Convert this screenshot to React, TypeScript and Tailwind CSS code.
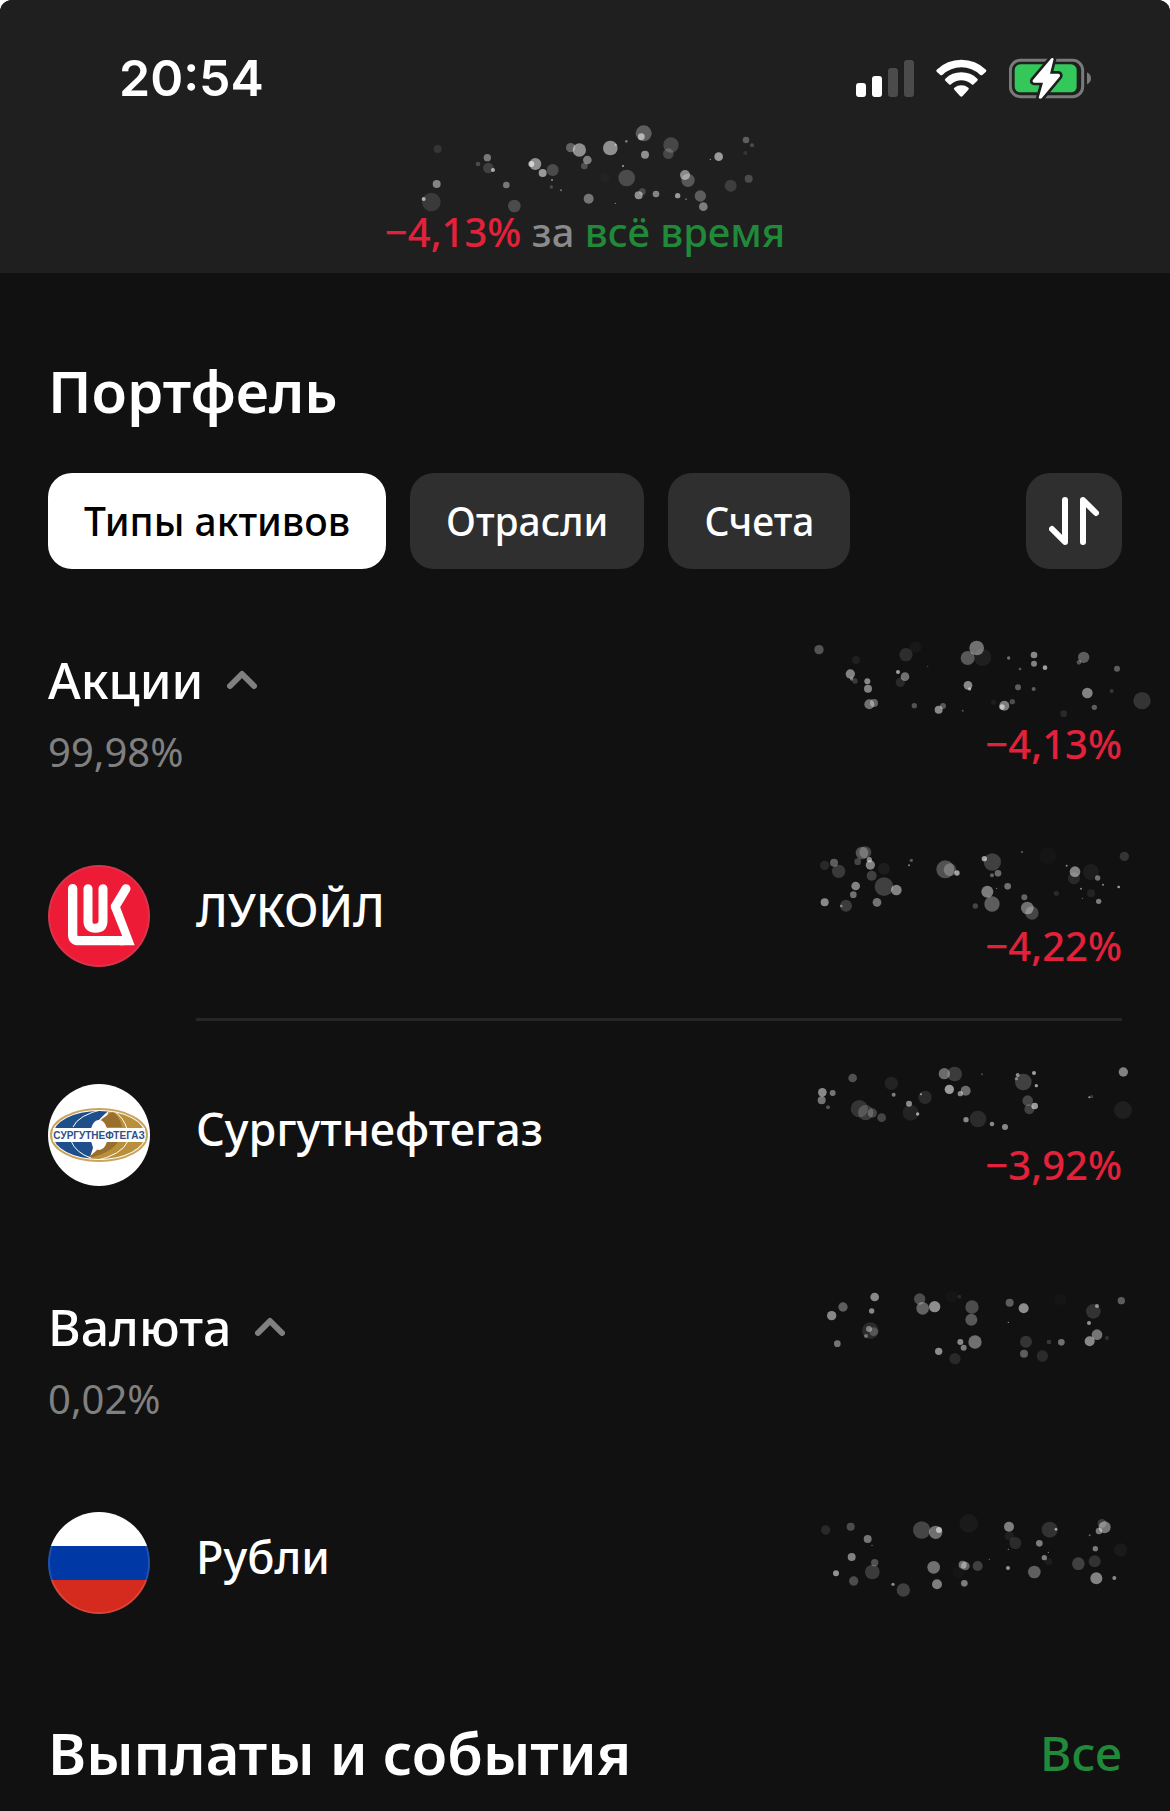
import { useState, type ReactNode } from 'react';

// [cx, cy, r, opacity]
type Dot = [number, number, number, number];

const totalDots: Dot[] = [
  [203, 117, 12, 0.1], [352, 143, 11, 0.4], [324, 162, 7, 0.2], [355, 174, 16, 0.15], [369, 180, 6, 0.6],
  [200, 222, 12, 0.45], [161, 267, 6, 0.6], [184, 276, 28, 0.12], [409, 225, 10, 0.4], [433, 288, 19, 0.2],
  [496, 162, 18, 0.5], [484, 162, 9, 0.6], [518, 189, 12, 0.55], [548, 180, 18, 0.2], [546, 210, 3, 0.5],
  [544, 231, 5, 0.2], [573, 241, 3, 0.4], [602, 113, 14, 0.3], [628, 120, 20, 0.5], [652, 150, 13, 0.42],
  [643, 168, 10, 0.22], [656, 266, 15, 0.38], [721, 114, 22, 0.5], [769, 94, 4, 0.4], [737, 105, 3, 0.5],
  [759, 168, 3, 0.6], [770, 204, 25, 0.2], [821, 70, 24, 0.28], [814, 80, 10, 0.55], [825, 134, 12, 0.5],
  [903, 105, 23, 0.18], [895, 131, 16, 0.18], [1046, 140, 13, 0.55], [1021, 148, 2, 0.6], [1128, 90, 10, 0.28],
  [1146, 106, 6, 0.2], [1126, 129, 6, 0.1], [1136, 206, 12, 0.2], [1082, 227, 18, 0.14], [945, 195, 15, 0.48],
  [954, 211, 20, 0.25], [923, 257, 8, 0.55], [991, 258, 17, 0.28], [1000, 290, 13, 0.42], [858, 252, 10, 0.45],
  [806, 256, 12, 0.5], [817, 245, 10, 0.2], [736, 280, 2, 0.5], [948, 268, 3, 0.3], [704, 203, 14, 0.02],
];

const stocksDots: Dot[] = [
  [117, 89, 14, 0.28], [228, 120, 12, 0.06], [211, 162, 14, 0.48], [215, 177, 5, 0.4], [225, 183, 8, 0.18],
  [262, 184, 9, 0.5], [264, 206, 12, 0.48], [268, 253, 15, 0.4], [282, 249, 12, 0.35], [378, 104, 20, 0.12],
  [406, 82, 18, 0.03], [354, 156, 6, 0.6], [375, 170, 13, 0.4], [361, 187, 14, 0.1], [443, 139, 2, 0.3],
  [403, 257, 8, 0.28], [476, 269, 12, 0.5], [489, 258, 9, 0.3], [548, 272, 3, 0.3], [590, 84, 22, 0.4],
  [563, 114, 21, 0.3], [608, 112, 26, 0.06], [564, 196, 13, 0.5], [569, 207, 5, 0.5], [686, 114, 5, 0.4],
  [720, 147, 4, 0.3], [762, 105, 10, 0.5], [762, 131, 9, 0.48], [795, 143, 7, 0.6], [714, 202, 9, 0.32],
  [761, 207, 6, 0.32], [673, 257, 15, 0.45], [666, 261, 8, 0.55], [697, 245, 8, 0.25], [641, 247, 8, 0.05],
  [911, 112, 17, 0.32], [897, 127, 7, 0.28], [1011, 146, 9, 0.32], [922, 219, 16, 0.48], [943, 262, 8, 0.32],
  [995, 213, 6, 0.16], [851, 281, 10, 0.1], [1086, 242, 26, 0.15],
];

const lukoilDots: Dot[] = [
  [134, 736, 14, 0.1], [162, 728, 12, 0.32], [176, 754, 20, 0.17], [246, 699, 19, 0.28], [256, 697, 18, 0.22],
  [233, 725, 10, 0.22], [268, 719, 8, 0.5], [271, 735, 14, 0.48], [312, 746, 18, 0.05], [275, 767, 15, 0.2],
  [227, 798, 13, 0.48], [220, 824, 10, 0.4], [312, 800, 28, 0.2], [349, 810, 16, 0.48], [134, 847, 12, 0.5],
  [198, 857, 18, 0.18], [184, 858, 4, 0.4], [291, 847, 13, 0.42], [394, 721, 5, 0.3], [387, 736, 3, 0.5],
  [496, 748, 27, 0.27], [510, 749, 19, 0.24], [531, 759, 8, 0.6], [637, 726, 26, 0.2], [613, 716, 8, 0.6],
  [654, 760, 10, 0.38], [636, 766, 6, 0.35], [726, 696, 3, 0.35], [650, 805, 2, 0.5], [683, 799, 10, 0.4],
  [622, 815, 18, 0.45], [636, 852, 23, 0.32], [586, 858, 8, 0.22], [733, 832, 9, 0.35], [742, 864, 19, 0.4],
  [756, 879, 20, 0.22], [803, 706, 26, 0.02], [885, 755, 16, 0.48], [882, 775, 18, 0.1], [933, 756, 24, 0.05],
  [953, 774, 8, 0.4], [860, 737, 3, 0.5], [969, 794, 3, 0.5], [903, 806, 3, 0.5], [933, 820, 12, 0.08],
  [1016, 801, 4, 0.6], [956, 844, 8, 0.45], [1033, 709, 14, 0.15], [829, 820, 8, 0.1], [907, 835, 2, 0.4],
];

const surgutDots: Dot[] = [
  [218, 234, 13, 0.27], [127, 277, 13, 0.5], [158, 279, 9, 0.42], [125, 301, 12, 0.42], [144, 322, 6, 0.27],
  [334, 250, 20, 0.08], [341, 284, 6, 0.45], [238, 326, 26, 0.15], [257, 338, 23, 0.18], [277, 339, 14, 0.22],
  [305, 353, 13, 0.22], [387, 311, 9, 0.5], [392, 338, 24, 0.08], [413, 342, 5, 0.6], [435, 292, 20, 0.11],
  [423, 283, 3, 0.6], [493, 221, 17, 0.38], [524, 222, 22, 0.18], [508, 268, 14, 0.58], [557, 272, 15, 0.38],
  [541, 281, 8, 0.5], [606, 223, 3, 0.25], [558, 359, 8, 0.5], [594, 357, 25, 0.11], [636, 372, 7, 0.5],
  [675, 381, 9, 0.5], [730, 246, 25, 0.2], [713, 225, 6, 0.5], [709, 236, 5, 0.4], [762, 219, 6, 0.6],
  [769, 257, 5, 0.6], [743, 302, 16, 0.22], [748, 328, 15, 0.2], [764, 318, 10, 0.58], [928, 292, 3, 0.6],
  [935, 290, 5, 0.18], [1030, 216, 14, 0.48], [1029, 330, 27, 0.06],
];

const currencyDots: Dot[] = [
  [284, 891, 13, 0.5], [189, 921, 14, 0.32], [155, 947, 14, 0.5], [275, 933, 8, 0.5], [271, 992, 25, 0.11],
  [267, 987, 9, 0.4], [281, 995, 13, 0.2], [258, 1008, 6, 0.35], [172, 1031, 10, 0.42], [419, 897, 17, 0.25],
  [428, 925, 19, 0.34], [464, 920, 17, 0.52], [538, 890, 6, 0.1], [515, 890, 18, 0.02], [576, 921, 20, 0.25],
  [574, 959, 18, 0.3], [476, 1054, 11, 0.52], [541, 1026, 9, 0.5], [551, 1043, 9, 0.45], [585, 1026, 20, 0.4],
  [525, 1076, 17, 0.1], [689, 908, 12, 0.32], [731, 925, 15, 0.52], [685, 967, 2, 0.6], [738, 1025, 18, 0.15],
  [732, 1061, 12, 0.32], [787, 1068, 17, 0.11], [807, 1026, 7, 0.16], [844, 1027, 10, 0.4], [841, 898, 18, 0.02],
  [940, 934, 22, 0.14], [951, 918, 6, 0.5], [927, 969, 6, 0.55], [951, 1004, 16, 0.42], [929, 1024, 15, 0.5],
  [981, 1014, 6, 0.13], [1024, 902, 11, 0.32],
];

const rublesDots: Dot[] = [
  [137, 150, 14, 0.1], [212, 140, 12, 0.25], [263, 177, 12, 0.42], [276, 196, 2, 0.5], [215, 231, 12, 0.48],
  [284, 248, 11, 0.27], [277, 276, 22, 0.18], [168, 280, 9, 0.55], [221, 303, 14, 0.25], [339, 313, 5, 0.5],
  [370, 330, 20, 0.2], [425, 150, 26, 0.22], [467, 157, 20, 0.4], [477, 150, 9, 0.55], [566, 130, 28, 0.04],
  [461, 262, 19, 0.4], [471, 313, 15, 0.46], [548, 254, 12, 0.4], [556, 258, 13, 0.35], [593, 258, 15, 0.2],
  [535, 276, 18, 0.02], [553, 310, 10, 0.45], [628, 238, 2, 0.4], [687, 140, 15, 0.46], [688, 168, 14, 0.06],
  [706, 189, 18, 0.11], [685, 208, 2, 0.5], [684, 264, 6, 0.55], [809, 149, 24, 0.14], [828, 148, 4, 0.6],
  [778, 190, 10, 0.45], [805, 217, 2, 0.5], [793, 233, 8, 0.45], [806, 245, 11, 0.05], [763, 276, 19, 0.33],
  [895, 251, 19, 0.2], [944, 244, 18, 0.14], [946, 206, 8, 0.45], [966, 130, 13, 0.18], [974, 142, 18, 0.43],
  [957, 153, 10, 0.43], [929, 166, 3, 0.35], [949, 295, 18, 0.48], [1003, 294, 6, 0.5], [1022, 210, 20, 0.04],
];

function HiddenAmount({ dots, viewBox, className }: { dots: Dot[]; viewBox: string; className: string }) {
  return (
    <svg viewBox={viewBox} className={`overflow-visible ${className}`} role="img" aria-label="Сумма скрыта">
      {dots.map(([cx, cy, r, opacity], i) => (
        <circle key={i} cx={cx} cy={cy} r={r} fill="#fff" fillOpacity={opacity} />
      ))}
    </svg>
  );
}

function StatusIcons() {
  return (
    <div className="flex items-center gap-[22px]">
      <svg viewBox="108 84 174 117" className="h-[39px] w-[58px]" aria-hidden="true">
        <rect x="108" y="156" width="30" height="42" rx="9" fill="#fff" />
        <rect x="156" y="135" width="30" height="63" rx="9" fill="#fff" />
        <rect x="204" y="111" width="30" height="87" rx="9" fill="#4b4b4b" />
        <rect x="252" y="87" width="30" height="111" rx="9" fill="#4b4b4b" />
      </svg>
      <svg viewBox="348 84 153 117" className="h-[39px] w-[51px]" fill="#fff" aria-hidden="true">
        <path d="M350 116 Q381 86 424 86 T498 116 Q500 119 498 122 L487 132 Q484 134 481 132 Q456 109 424 109 T367 132 Q364 134 361 132 L350 122 Q348 119 350 116Z" />
        <path d="M376 143 Q396 124 424 124 T472 143 Q475 146 472 149 L461 160 Q458 163 455 160 Q441 148 424 148 T393 160 Q390 163 387 160 L376 149 Q373 146 376 143Z" />
        <path d="M403 170 Q412 163 424 163 T445 170 Q448 173 445 176 L428 195 Q424 199 420 195 L403 176 Q400 173 403 170Z" />
      </svg>
      <svg viewBox="567 81 246 123" className="h-[41px] w-[82px]" aria-hidden="true">
        <rect x="571" y="88" width="217" height="109" rx="30" fill="none" stroke="#7a7a7a" strokeWidth="9" />
        <rect x="584" y="100" width="186" height="84" rx="17" fill="#34c759" />
        <path d="M801 124 Q813 130 813 142 T801 160Z" fill="#7a7a7a" />
        <path
          d="M694 82 L639 147 Q635 154 643 155 H669 L656 200 Q659 205 665 202 L719 137 Q722 129 715 128 H690 L701 84 Q699 80 694 82Z"
          fill="#fff"
          stroke="#1f1f1f"
          strokeWidth="16"
          strokeLinejoin="round"
          paintOrder="stroke"
        />
      </svg>
    </div>
  );
}

function LukoilLogo() {
  return (
    <svg viewBox="144 705 306 306" className="size-[102px]" aria-hidden="true">
      <circle cx="297" cy="858" r="153" fill="#d8344c" />
      <circle cx="297" cy="858" r="147" fill="#ee1b37" />
      <path d="M218 776 V914 Q218 932 236 932 H370" fill="none" stroke="#fff" strokeWidth="28" strokeLinecap="round" />
      <path d="M264 776 V874 Q264 895 286 895 T309 874 V776" fill="none" stroke="#fff" strokeWidth="27" strokeLinecap="round" />
      <path d="M378 776 L346 829" fill="none" stroke="#fff" strokeWidth="27" strokeLinecap="round" />
      <path d="M333 834 Q331 828 334 822 L360 830 L404 946 H360 V919 H367Z" fill="#fff" />
    </svg>
  );
}

function SurgutLogo() {
  return (
    <svg viewBox="0 0 102 102" className="size-[102px]" aria-hidden="true">
      <defs>
        <clipPath id="surgut-oval">
          <ellipse cx="51" cy="51" rx="46" ry="24" />
        </clipPath>
      </defs>
      <circle cx="51" cy="51" r="51" fill="#fff" />
      <ellipse cx="51" cy="51" rx="48" ry="26" fill="#fff" stroke="#c9a45c" strokeWidth="2" />
      <g clipPath="url(#surgut-oval)">
        <path d="M0 20 H70 Q52 32 46 43 Q42 52 45 64 L39 82 H0Z" fill="#1f4f8b" />
        <path d="M102 82 H32 Q50 70 56 58 Q60 50 57 38 L63 20 H102Z" fill="#b98f3c" />
        <path d="M65 28 Q52 34 48 43 H74 Q72 33 65 28Z" fill="#9a6f2e" />
        <path d="M37 75 Q50 68 54 58 H70 Q62 70 37 75Z" fill="#9a6f2e" />
        <ellipse cx="51" cy="51" rx="9" ry="15" fill="#fff" />
        <path d="M56 25 Q30 31 25 43 M23 57 Q28 69 43 74 M46 77 Q74 71 80 57 M66 27 Q76 34 79 45" fill="none" stroke="#fff" strokeWidth="1" />
      </g>
      <rect x="5" y="44" width="92" height="14" fill="#fff" />
      <text x="51" y="55" textAnchor="middle" fill="#2f4f86" className="font-['Liberation_Sans_Narrow','Liberation_Sans',sans-serif] text-[10px] font-bold">
        СУРГУТНЕФТЕГАЗ
      </text>
    </svg>
  );
}

function RussiaFlag() {
  return (
    <svg viewBox="0 0 102 102" className="size-[102px]" aria-hidden="true">
      <defs>
        <clipPath id="flag-circle">
          <circle cx="51" cy="51" r="51" />
        </clipPath>
      </defs>
      <g clipPath="url(#flag-circle)">
        <rect width="102" height="34" fill="#fff" />
        <rect y="34" width="102" height="34" fill="#0039a6" />
        <rect y="68" width="102" height="34" fill="#d52b1e" />
      </g>
      <circle cx="51" cy="51" r="50" fill="none" stroke="#fff" strokeOpacity="0.12" strokeWidth="2" />
    </svg>
  );
}

function SectionHeader({ title, share, children }: { title: string; share: string; children: ReactNode }) {
  return (
    <div className="flex items-start justify-between">
      <div className="pt-2">
        <h2>
          <button type="button" className="flex items-center gap-6 text-[50px] leading-[60px] font-medium text-white">
            {title}
            <svg viewBox="0 0 30 20" className="h-5 w-[30px]" fill="none" stroke="#808080" strokeWidth="6" strokeLinecap="round" strokeLinejoin="round" aria-hidden="true">
              <path d="M3 16 L15 4 L27 16" />
            </svg>
          </button>
        </h2>
        <p className="mt-[18px] text-[40px] leading-[48px] text-[#808080]">{share}</p>
      </div>
      <div className="flex flex-col items-end">{children}</div>
    </div>
  );
}

function AssetRow({ logo, name, divider, children }: { logo: ReactNode; name: string; divider?: boolean; children: ReactNode }) {
  return (
    <li className="flex h-[219px] gap-[46px]">
      <div className="pt-[63px]">{logo}</div>
      <div className={`flex flex-1 items-start justify-between ${divider ? 'border-b-3 border-[#262626]' : ''}`}>
        <span className="pt-[82px] text-[45px] leading-[52px] font-medium text-white">{name}</span>
        <div className="flex flex-col items-end pt-[42px]">{children}</div>
      </div>
    </li>
  );
}

function Change({ value }: { value: string }) {
  return <span className="text-[40px] leading-[48px] font-medium text-[#e3213b]">{value}</span>;
}

const tabs = ['Типы активов', 'Отрасли', 'Счета'];

export default function App() {
  const [active, setActive] = useState(tabs[0]);

  return (
    <div className="bg-white">
      <div className="min-h-screen overflow-hidden rounded-t-xl bg-[#111111] pb-4 font-['Noto_Sans','Open_Sans',sans-serif]">
        <header className="flex flex-col items-center bg-[#1f1f1f] pt-12 pb-[17px]">
          <div className="flex h-[60px] w-full items-center justify-between pr-[79px] pl-[119px]">
            <time className="font-['Inter',sans-serif] text-[50px] leading-[60px] font-semibold text-white">20:54</time>
            <StatusIcons />
          </div>
          <HiddenAmount dots={totalDots} viewBox="141 42 1008 252" className="mt-4 h-[84px] w-[336px]" />
          <p className="text-[40px] leading-[48px] font-medium text-[#8a8a8a]">
            <span className="text-[#e3213b]">−4,13%</span> за{' '}
            <button type="button" className="text-[#21893a]">всё время</button>
          </p>
        </header>

        <main className="px-12">
          <h1 className="mt-[82px] text-[58px] leading-[72px] font-semibold text-white">Портфель</h1>

          <div className="mt-[46px] flex items-center gap-6">
            {tabs.map((tab) => (
              <button
                key={tab}
                type="button"
                aria-pressed={tab === active}
                onClick={() => setActive(tab)}
                className={`h-24 rounded-3xl px-9 text-[39px] leading-[48px] font-medium ${tab === active ? 'bg-white text-black' : 'bg-[#2f2f2f] text-white'}`}
              >
                {tab}
              </button>
            ))}
            <button type="button" aria-label="Сортировка" className="ml-auto flex size-24 items-center justify-center rounded-3xl bg-[#2f2f2f]">
              <svg viewBox="0 0 50 50" className="size-[50px]" fill="none" stroke="#fff" strokeWidth="6" strokeLinecap="round" strokeLinejoin="round">
                <path d="M16 4 V46 L3 33" />
                <path d="M34 46 V4 L47 17" />
              </svg>
            </button>
          </div>

          <section className="mt-[73px]">
            <SectionHeader title="Акции" share="99,98%">
              <HiddenAmount dots={stocksDots} viewBox="81 66 945 234" className="h-[78px] w-[315px]" />
              <Change value="−4,13%" />
            </SectionHeader>
            <ul className="mt-[26px]">
              <AssetRow logo={<LukoilLogo />} name="ЛУКОЙЛ" divider>
                <HiddenAmount dots={lukoilDots} viewBox="81 672 945 234" className="h-[78px] w-[315px]" />
                <Change value="−4,22%" />
              </AssetRow>
              <AssetRow logo={<SurgutLogo />} name="Сургутнефтегаз">
                <HiddenAmount dots={surgutDots} viewBox="81 189 945 234" className="h-[78px] w-[315px]" />
                <Change value="−3,92%" />
              </AssetRow>
            </ul>
          </section>

          <section className="mt-[49px]">
            <SectionHeader title="Валюта" share="0,02%">
              <HiddenAmount dots={currencyDots} viewBox="81 867 945 234" className="h-[78px] w-[315px]" />
            </SectionHeader>
            <ul className="mt-[26px]">
              <AssetRow logo={<RussiaFlag />} name="Рубли">
                <HiddenAmount dots={rublesDots} viewBox="81 33 945 234" className="h-[78px] w-[315px]" />
              </AssetRow>
            </ul>
          </section>

          <div className="mt-[49px] flex items-center justify-between">
            <h1 className="text-[58px] leading-[72px] font-semibold text-white">Выплаты и события</h1>
            <a href="#events" className="text-[48px] leading-[60px] font-medium text-[#21893a]">Все</a>
          </div>
        </main>
      </div>
    </div>
  );
}
